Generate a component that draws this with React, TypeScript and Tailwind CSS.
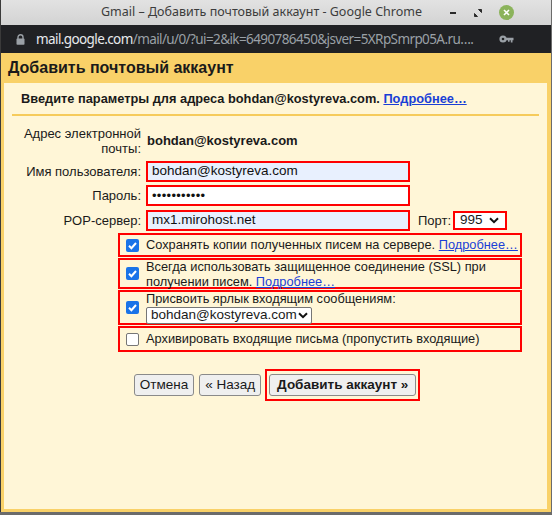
import React from "react";

const arial = { fontFamily: '"Liberation Sans", Arial, sans-serif' };

const Chevron = () => (
  <svg width="10" height="7" viewBox="0 0 10 7" className="shrink-0">
    <path d="M1 1.2 L5 5.2 L9 1.2" fill="none" stroke="#111" strokeWidth="2" />
  </svg>
);

const Check = ({ on }: { on: boolean }) =>
  on ? (
    <span className="w-[13px] h-[13px] rounded-[2px] bg-[#1a73e8] flex items-center justify-center shrink-0">
      <svg width="11" height="11" viewBox="0 0 11 11">
        <path d="M2 5.8 L4.4 8.2 L9 3" fill="none" stroke="#fff" strokeWidth="2" />
      </svg>
    </span>
  ) : (
    <span className="w-[13px] h-[13px] rounded-[2px] bg-white border border-[#767676] shrink-0" />
  );

const Link = ({ children }: { children: React.ReactNode }) => (
  <a className="text-[#1a3fd6] underline cursor-pointer">{children}</a>
);

const Field = ({ value, bg, password }: { value: string; bg: string; password?: boolean }) => (
  <div className={`w-[264px] h-[21px] border-2 border-[#f00] ${bg} flex items-center pl-[4px] text-[13.5px] text-[#111]`}>
    {password ? <span className="text-[13px] tracking-[0.3px]">•••••••••••</span> : value}
  </div>
);

export default function App() {
  return (
    <div className="w-[552px] h-[515px] overflow-hidden bg-[#6b6b6b] flex" style={arial}>
      <div className="w-[551px] h-[512px] flex flex-col border-l border-[#3a3a3a]">
        {/* title bar */}
        <div
          className="h-[25px] flex items-center bg-gradient-to-b from-[#e2e2e2] to-[#d3d3d3] text-[#3c3c3c] text-[12.5px]"
          style={{ fontFamily: '"Noto Sans", "DejaVu Sans", sans-serif' }}
        >
          <span className="pl-[100px] whitespace-nowrap">Gmail – Добавить почтовый аккаунт - Google Chrome</span>
          <div className="ml-auto flex items-center pr-[37px]">
            <span className="w-[6px] h-[2px] bg-[#2b2b2b]" />
            <svg width="8" height="8" viewBox="0 0 8 8" className="ml-[18px]">
              <path d="M4.5 0.5 H7.5 V3.5 Z M0.5 4.5 V7.5 H3.5 Z" fill="#2b2b2b" stroke="#2b2b2b" strokeWidth="1" />
            </svg>
            <span className="ml-[17px] w-[15px] h-[15px] rounded-full bg-[#8bb35b] flex items-center justify-center">
              <svg width="7" height="7" viewBox="0 0 7 7">
                <path d="M1 1 L6 6 M6 1 L1 6" stroke="#fff" strokeWidth="1.6" />
              </svg>
            </span>
          </div>
        </div>
        {/* address bar */}
        <div
          className="h-[28px] bg-[#202124] flex items-center text-[13.5px] overflow-hidden"
          style={{ fontFamily: '"Noto Sans", "DejaVu Sans", sans-serif' }}
        >
          <svg width="9" height="11" viewBox="0 0 9 11" className="ml-[15px] shrink-0">
            <path d="M2 5 V3.2 A2.5 2.5 0 0 1 7 3.2 V5" fill="none" stroke="#9aa0a6" strokeWidth="1.4" />
            <rect x="0.5" y="4.6" width="8" height="6.2" rx="0.8" fill="#9aa0a6" />
          </svg>
          <span className="ml-[11px] whitespace-nowrap tracking-[-0.6px] w-[455px] shrink-0">
            <span className="text-[#e8eaed]">mail.google.com</span>
            <span className="text-[#9aa0a6]">/mail/u/0/?ui=2&amp;ik=6490786450&amp;jsver=5XRpSmrp05A.ru….</span>
          </span>
          <svg width="15" height="8" viewBox="0 0 15 8" className="ml-auto mr-[37px] shrink-0">
            <circle cx="4" cy="4" r="3.6" fill="#9aa0a6" />
            <circle cx="4" cy="4" r="1.3" fill="#202124" />
            <path d="M7 2.8 H14.5 V5.2 H13.5 V7.5 H11.8 V5.2 H10.6 V6.8 H9 V5.2 H7 Z" fill="#9aa0a6" />
          </svg>
        </div>
        {/* dialog */}
        <div className="flex-1 bg-[#f9d168] flex flex-col pl-[3px] pr-[4px] pb-[3px]">
          <div className="h-[30px] flex items-center pl-[4px] text-[16px] font-bold text-[#1a1a1a]">
            Добавить почтовый аккаунт
          </div>
          <div className="flex-1 bg-[#fff6d7] flex flex-col text-[13px] text-[#1a1a1a]">
            <div className="pt-[8px] pl-[17px] font-bold h-[31px] leading-[15px] text-[12.8px]">
              Введите параметры для адреса bohdan@kostyreva.com. <Link>Подробнее…</Link>
            </div>
            <div className="mx-[8px] h-[2px] bg-[#f6cb5b]" />
            {/* form */}
            <div className="flex flex-col mt-[9px] text-[13px]">
              <div className="flex items-center h-[32px]">
                <div className="w-[137px] text-right leading-[15px]">
                  Адрес электронной
                  <br />
                  почты:
                </div>
                <div className="ml-[6px] font-bold">bohdan@kostyreva.com</div>
              </div>
              <div className="flex items-center mt-[4px]">
                <div className="w-[137px] text-right">Имя пользователя:</div>
                <div className="ml-[5px]">
                  <Field value="bohdan@kostyreva.com" bg="bg-[#e8f0fe]" />
                </div>
              </div>
              <div className="flex items-center mt-[3px]">
                <div className="w-[137px] text-right">Пароль:</div>
                <div className="ml-[5px]">
                  <Field value="" bg="bg-white" password />
                </div>
              </div>
              <div className="flex items-center mt-[4px]">
                <div className="w-[137px] text-right">POP-сервер:</div>
                <div className="ml-[5px]">
                  <Field value="mx1.mirohost.net" bg="bg-[#e8f0fe]" />
                </div>
                <div className="ml-[8px]">Порт:</div>
                <div className="ml-[2px] w-[54px] h-[19px] border-2 border-[#f00] bg-white flex items-center pl-[5px] pr-[6px] justify-between text-[13.5px]">
                  <span>995</span>
                  <Chevron />
                </div>
              </div>
            </div>
            {/* options */}
            <div className="ml-[114px] w-[404px] flex flex-col mt-[2px] text-[12.8px]">
              <div className="h-[24px] border-2 border-[#f00] flex items-center pl-[6px]">
                <Check on />
                <span className="ml-[7px] whitespace-nowrap">
                  Сохранять копии полученных писем на сервере. <Link>Подробнее…</Link>
                </span>
              </div>
              <div className="h-[31px] mt-[1px] border-2 border-[#f00] flex items-center pl-[6px]">
                <Check on />
                <span className="ml-[7px] leading-[15px]">
                  Всегда использовать защищенное соединение (SSL) при
                  <br />
                  получении писем. <Link>Подробнее…</Link>
                </span>
              </div>
              <div className="h-[35px] mt-[1px] border-2 border-[#f00] flex items-center pl-[6px]">
                <Check on />
                <div className="ml-[7px] flex flex-col">
                  <span className="leading-[15px]">Присвоить ярлык входящим сообщениям:</span>
                  <div className="mt-[1px] w-[166px] h-[17px] bg-white border border-[#767676] rounded-[2px] flex items-center justify-between pl-[4px] pr-[3px] text-[13.5px]">
                    <span>bohdan@kostyreva.com</span>
                    <Chevron />
                  </div>
                </div>
              </div>
              <div className="h-[26px] mt-[1px] border-2 border-[#f00] flex items-center pl-[6px]">
                <Check on={false} />
                <span className="ml-[7px]">Архивировать входящие письма (пропустить входящие)</span>
              </div>
            </div>
            {/* buttons */}
            <div className="flex justify-center items-center mt-[17px] gap-[5px] text-[13.5px] pl-[3px]">
              <button className="h-[22px] px-[5px] bg-[#efefef] border border-[#8a8a8a] rounded-[3px]">Отмена</button>
              <button className="h-[22px] px-[5px] bg-[#efefef] border border-[#8a8a8a] rounded-[3px]">« Назад</button>
              <div className="border-2 border-[#f00] px-[2px] py-[3px] -ml-[1px]">
                <button className="h-[22px] px-[7px] bg-[#efefef] border border-[#8a8a8a] rounded-[3px] font-bold">
                  Добавить аккаунт »
                </button>
              </div>
            </div>
          </div>
        </div>
      </div>
    </div>
  );
}
